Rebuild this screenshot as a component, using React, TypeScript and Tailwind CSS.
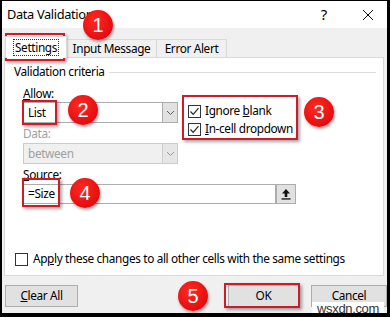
import React from 'react';

const font = "font-['Noto_Sans','Open_Sans',sans-serif]";

const Check = ({ checked }: { checked?: boolean }) => (
  <div className="w-[13px] h-[13px] border border-[#333333] bg-white flex items-center justify-center shrink-0">
    {checked && (
      <svg width="11" height="11" viewBox="0 0 11 11">
        <polyline points="1.5,5.5 4.2,8.3 9.5,2.2" fill="none" stroke="#222" strokeWidth="1.2" />
      </svg>
    )}
  </div>
);

const Chevron = ({ color = '#606060' }: { color?: string }) => (
  <svg width="9" height="6" viewBox="0 0 9 6">
    <polyline points="1,1 4.5,4.5 8,1" fill="none" stroke={color} strokeWidth="1" />
  </svg>
);

const Combo = ({ value, disabled }: { value: string; disabled?: boolean }) => (
  <div
    className={`h-[21px] flex border ${
      disabled ? 'border-[#cccccc] bg-[#f0f0f0] text-[#a0a0a0]' : 'border-[#adadad] bg-white text-black'
    }`}
  >
    <div className="flex-1 flex items-center pl-[4px]">{value}</div>
    <div
      className={`w-[15px] flex items-center justify-center border-l ${
        disabled ? 'border-[#cccccc] bg-[#e6e6e6]' : 'border-[#adadad] bg-[#e1e1e1]'
      }`}
    >
      <Chevron color={disabled ? '#9a9a9a' : '#606060'} />
    </div>
  </div>
);

const RedBox = ({ className }: { className: string }) => (
  <div className={`absolute border-2 border-[#cf1a28] shadow-[2px_2px_3px_rgba(0,0,0,0.35)] ${className}`} />
);

const Badge = ({ n, className }: { n: number; className: string }) => (
  <div
    className={`absolute w-[30px] h-[30px] rounded-full bg-[radial-gradient(circle_at_40%_35%,#ff2a1f,#d9000c)] shadow-[1px_2px_3px_rgba(0,0,0,0.35)] flex items-center justify-center text-white text-[20px] leading-none font-['Liberation_Sans',Arial,sans-serif] ${className}`}
  >
    {n}
  </div>
);

const Button = ({ children, className = '' }: { children: React.ReactNode; className?: string }) => (
  <div className={`h-[22px] flex items-center justify-center bg-[#e1e1e1] border border-[#adadad] ${className}`}>
    {children}
  </div>
);

export default function App() {
  return (
    <div
      className={`relative w-[390px] h-[317px] overflow-hidden border-l-2 border-r-[3px] border-t border-b-4 border-black bg-[#f0f0f0] flex flex-col text-[11.8px] tracking-[-0.35px] text-black ${font}`}
    >
      {/* Title bar */}
      <div className="h-[27px] bg-white flex items-center pl-[5px] shrink-0">
        <span className="text-[12.8px]">Data Validation</span>
        <span className="ml-auto mr-[35px] text-[15px]">?</span>
        <svg width="12" height="12" viewBox="0 0 12 12" className="mr-[13px]">
          <path d="M1 1 L11 11 M11 1 L1 11" stroke="#111" strokeWidth="1" />
        </svg>
      </div>

      {/* Tabs */}
      <div className="h-[29px] pt-[8px] pl-[3px] flex items-end shrink-0">
        <div className="relative z-10 h-[22px] w-[62px] -mb-px bg-white border border-b-0 border-[#d9d9d9] flex items-center justify-center">
          <span className="px-[1px] leading-[15px] outline-1 outline-dotted outline-[#333]">Settings</span>
        </div>
        <div className="h-[18px] w-[90px] bg-[#f0f0f0] border border-b-0 border-l-0 border-[#d9d9d9] flex items-center justify-center">
          Input Message
        </div>
        <div className="h-[18px] w-[70px] bg-[#f0f0f0] border border-b-0 border-l-0 border-[#d9d9d9] flex items-center justify-center">
          Error Alert
        </div>
      </div>

      {/* Panel */}
      <div className="flex-1 ml-[2px] mr-[3px] bg-white border border-[#d9d9d9] flex flex-col">
        <div className="flex items-center h-[16px] mt-[6px] ml-[9px] mr-[7px]">
          <span>Validation criteria</span>
          <div className="flex-1 h-px bg-[#dcdcdc] ml-[4px]" />
        </div>

        <div className="flex mt-[5px] ml-[18px]">
          <div className="w-[155px] flex flex-col">
            <div className="h-[16px] leading-[16px]">
              <span className="underline">A</span>llow:
            </div>
            <div className="mt-[1px]">
              <Combo value="List" />
            </div>
            <div className="h-[16px] leading-[16px] mt-[2px] text-[#a0a0a0]">Data:</div>
            <div className="mt-[2px]">
              <Combo value="between" disabled />
            </div>
          </div>
          <div className="ml-[10px] mt-[17px] flex flex-col">
            <div className="h-[18px] flex items-center gap-[4px]">
              <Check checked />
              <span>
                Ignore <span className="underline">b</span>lank
              </span>
            </div>
            <div className="h-[18px] flex items-center gap-[4px]">
              <Check checked />
              <span>
                <span className="underline">I</span>n-cell dropdown
              </span>
            </div>
          </div>
        </div>

        <div className="ml-[18px] mt-[2px] h-[16px] leading-[16px]">
          <span className="underline">S</span>ource:
        </div>
        <div className="ml-[18px] mt-[2px] flex">
          <div className="w-[253px] h-[20px] border border-[#adadad] bg-white flex items-center pl-[4px]">=Size</div>
          <div className="w-[20px] h-[20px] bg-[#e1e1e1] border border-[#adadad] flex items-center justify-center">
            <svg width="12" height="12" viewBox="0 0 12 12">
              <path d="M6 1 L10 5.5 L7.3 5.5 L7.3 9 L4.7 9 L4.7 5.5 L2 5.5 Z" fill="#111" />
              <rect x="1.5" y="10.3" width="9" height="1.3" fill="#111" />
            </svg>
          </div>
        </div>

        <div className="mt-auto mb-[8px] ml-[10px] h-[16px] flex items-center gap-[5px]">
          <Check />
          <span>
            Ap<span className="underline">p</span>ly these changes to all other cells with the same settings
          </span>
        </div>
      </div>

      {/* Footer */}
      <div className="h-[37px] shrink-0 pt-[9px] pl-[3px] flex">
        <Button className="w-[73px]">
          <span>
            <span className="underline">C</span>lear All
          </span>
        </Button>
        <Button className="ml-auto w-[71px] border-[#0078d7]">OK</Button>
        <Button className="ml-[12px] w-[76px]">Cancel</Button>
      </div>

      {/* Annotations */}
      <RedBox className="left-[3px] top-[32px] w-[60px] h-[28px]" />
      <Badge n={1} className="left-[81px] top-[9px]" />
      <RedBox className="left-[20px] top-[99px] w-[35px] h-[25px]" />
      <Badge n={2} className="left-[66px] top-[94px]" />
      <RedBox className="left-[180px] top-[94px] w-[116px] h-[45px]" />
      <Badge n={3} className="left-[302px] top-[96px]" />
      <RedBox className="left-[20px] top-[177px] w-[38px] h-[29px]" />
      <Badge n={4} className="left-[68px] top-[177px]" />
      <RedBox className="left-[222px] top-[282px] w-[76px] h-[25px]" />
      <Badge n={5} className="left-[176px] top-[280px]" />
      <div className="absolute left-[310px] top-[301px] w-[72px] h-[12px] bg-white flex items-center justify-center text-[13px] leading-none text-[#333] font-['Liberation_Sans',Arial,sans-serif]">
        wsxdn.com
      </div>
    </div>
  );
}
